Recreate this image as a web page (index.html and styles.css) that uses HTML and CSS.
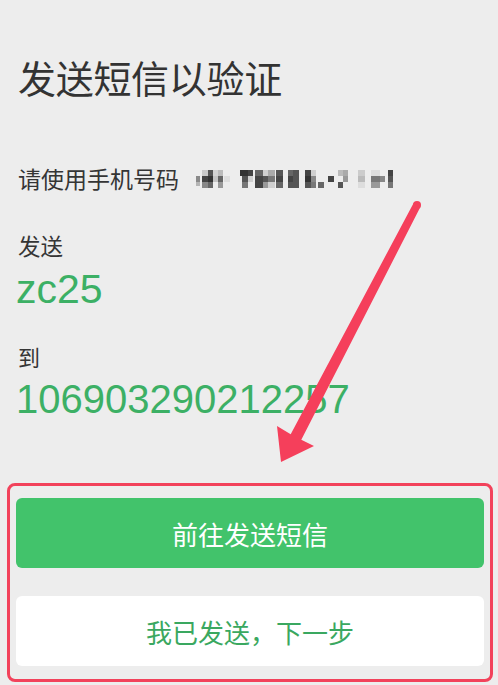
FILE: index.html
```html
<!DOCTYPE html>
<html lang="zh-CN">
<head>
<meta charset="utf-8">
<title>发送短信以验证</title>
<link rel="stylesheet" href="styles.css">
</head>
<body>
<div class="page">
  <div class="content">
    <h1 class="title">发送短信以验证</h1>
    <div class="phone-row">
      <span class="label">请使用手机号码</span>
      <svg class="mosaic" width="200" height="20" viewBox="0 0 200 20" aria-label="手机号码（已打码）">
        <rect x="2" y="6" width="4" height="6" fill="#8a8a8a"/>
        <rect x="2" y="12" width="4" height="4" fill="#b5b5b5"/>
        <rect x="8" y="0" width="6" height="6" fill="#c9c9c9"/>
        <rect x="8" y="6" width="6" height="6" fill="#444"/>
        <rect x="8" y="12" width="6" height="6" fill="#888"/>
        <rect x="14" y="0" width="5" height="6" fill="#555"/>
        <rect x="14" y="6" width="5" height="6" fill="#333"/>
        <rect x="14" y="12" width="5" height="6" fill="#666"/>
        <rect x="19" y="0" width="5" height="6" fill="#d3d3d3"/>
        <rect x="19" y="6" width="5" height="6" fill="#c4c4c4"/>
        <rect x="24" y="0" width="5" height="6" fill="#bbb"/>
        <rect x="24" y="6" width="5" height="6" fill="#666"/>
        <rect x="24" y="12" width="5" height="6" fill="#999"/>
        <rect x="30" y="6" width="6" height="6" fill="#dedede"/>
        <rect x="46" y="0" width="8" height="6" fill="#333"/>
        <rect x="48" y="6" width="6" height="6" fill="#555"/>
        <rect x="48" y="12" width="6" height="6" fill="#777"/>
        <rect x="54" y="0" width="5" height="6" fill="#444"/>
        <rect x="54" y="6" width="5" height="6" fill="#cfcfcf"/>
        <rect x="61" y="0" width="8" height="6" fill="#666"/>
        <rect x="61" y="6" width="8" height="6" fill="#444"/>
        <rect x="61" y="12" width="8" height="6" fill="#444"/>
        <rect x="69" y="0" width="5" height="6" fill="#d0d0d0"/>
        <rect x="69" y="6" width="5" height="6" fill="#555"/>
        <rect x="69" y="12" width="5" height="6" fill="#999"/>
        <rect x="74" y="0" width="7" height="6" fill="#aaa"/>
        <rect x="74" y="6" width="7" height="6" fill="#777"/>
        <rect x="74" y="12" width="7" height="6" fill="#cfcfcf"/>
        <rect x="82" y="0" width="7" height="6" fill="#555"/>
        <rect x="82" y="6" width="7" height="6" fill="#444"/>
        <rect x="82" y="12" width="7" height="6" fill="#666"/>
        <rect x="94" y="0" width="7" height="6" fill="#666"/>
        <rect x="94" y="6" width="7" height="6" fill="#444"/>
        <rect x="94" y="12" width="7" height="6" fill="#555"/>
        <rect x="99" y="0" width="6" height="18" fill="#555"/>
        <rect x="111" y="0" width="6" height="6" fill="#444"/>
        <rect x="111" y="6" width="6" height="6" fill="#333"/>
        <rect x="111" y="12" width="6" height="6" fill="#555"/>
        <rect x="117" y="0" width="5" height="6" fill="#cfcfcf"/>
        <rect x="117" y="6" width="5" height="6" fill="#888"/>
        <rect x="117" y="12" width="5" height="6" fill="#777"/>
        <rect x="124" y="12" width="6" height="6" fill="#666"/>
        <rect x="134" y="6" width="6" height="6" fill="#444"/>
        <rect x="144" y="0" width="5" height="6" fill="#bbb"/>
        <rect x="144" y="12" width="5" height="6" fill="#555"/>
        <rect x="149" y="0" width="5" height="6" fill="#aaa"/>
        <rect x="149" y="6" width="5" height="6" fill="#999"/>
        <rect x="164" y="0" width="7" height="6" fill="#ccc"/>
        <rect x="164" y="6" width="7" height="6" fill="#bbb"/>
        <rect x="164" y="12" width="7" height="6" fill="#ddd"/>
        <rect x="177" y="0" width="9" height="6" fill="#ddd"/>
        <rect x="177" y="6" width="9" height="6" fill="#777"/>
        <rect x="177" y="12" width="9" height="6" fill="#999"/>
        <rect x="186" y="6" width="5" height="6" fill="#888"/>
        <rect x="194" y="0" width="5" height="6" fill="#444"/>
        <rect x="194" y="6" width="5" height="6" fill="#555"/>
        <rect x="194" y="12" width="5" height="6" fill="#777"/>
      </svg>
    </div>
    <div class="label send-label">发送</div>
    <div class="code">zc25</div>
    <div class="label to-label">到</div>
    <div class="code number">106903290212257</div>
  </div>

  <div class="highlight">
    <button class="btn btn-primary" type="button">前往发送短信</button>
    <button class="btn btn-secondary" type="button">我已发送，下一步</button>
  </div>

  <svg class="arrow" width="498" height="685" viewBox="0 0 498 685" aria-hidden="true">
    <circle cx="417" cy="205" r="4" fill="#f53f5b"/>
    <polygon points="420.5,206.8 301.3,439.8 314,446 281,462 277,426 290.7,434.2 413.5,203.2" fill="#f53f5b"/>
  </svg>
</div>
</body>
</html>
```

FILE: styles.css
```css
* {
  box-sizing: border-box;
}

html,
body {
  margin: 0;
  padding: 0;
  background: #ededed;
}

body {
  font-family: "Noto Sans CJK SC", "Noto Sans", sans-serif;
  color: #353535;
}

.page {
  position: relative;
  width: 498px;
  height: 685px;
  overflow: hidden;
}

.content {
  padding: 58px 18px 0 18px;
}

.title {
  margin: 0;
  font-size: 38px;
  line-height: 38px;
  font-weight: 400;
  color: #333;
  letter-spacing: -0.3px;
}

.phone-row {
  margin-top: 71px;
  display: flex;
  align-items: center;
  gap: 15px;
  height: 23px;
}

.label {
  font-size: 23px;
  line-height: 23px;
  color: #353535;
}

.mosaic {
  display: block;
  margin-top: 2px;
}

.send-label {
  margin-top: 44px;
  font-size: 22.5px;
  line-height: 22px;
}

.to-label {
  margin-top: 35px;
  font-size: 22px;
  line-height: 22px;
}

.code {
  font-family: "Liberation Sans", Arial, sans-serif;
  font-size: 41px;
  line-height: 41px;
  color: #3cb065;
  margin-left: -2px;
}

.send-label + .code {
  margin-top: 13px;
}

.number {
  margin-top: 12px;
  font-size: 40px;
  letter-spacing: 0;
}

.highlight {
  margin: 63px 5px 0 7px;
  border: 3px solid #f2425b;
  border-radius: 8px;
  padding: 12px 6px 13px 6px;
  display: flex;
  flex-direction: column;
  gap: 28px;
}

.btn {
  display: flex;
  align-items: center;
  justify-content: center;
  width: 100%;
  height: 70px;
  border: none;
  border-radius: 6px;
  font-family: "Noto Sans CJK SC", "Noto Sans", sans-serif;
  font-size: 26px;
  font-weight: 400;
  padding: 0;
}

.btn-primary {
  background: #42c36b;
  color: #fff;
}

.btn-secondary {
  background: #fff;
  color: #3aa860;
}

.arrow {
  position: absolute;
  left: 0;
  top: 0;
  pointer-events: none;
}
```
